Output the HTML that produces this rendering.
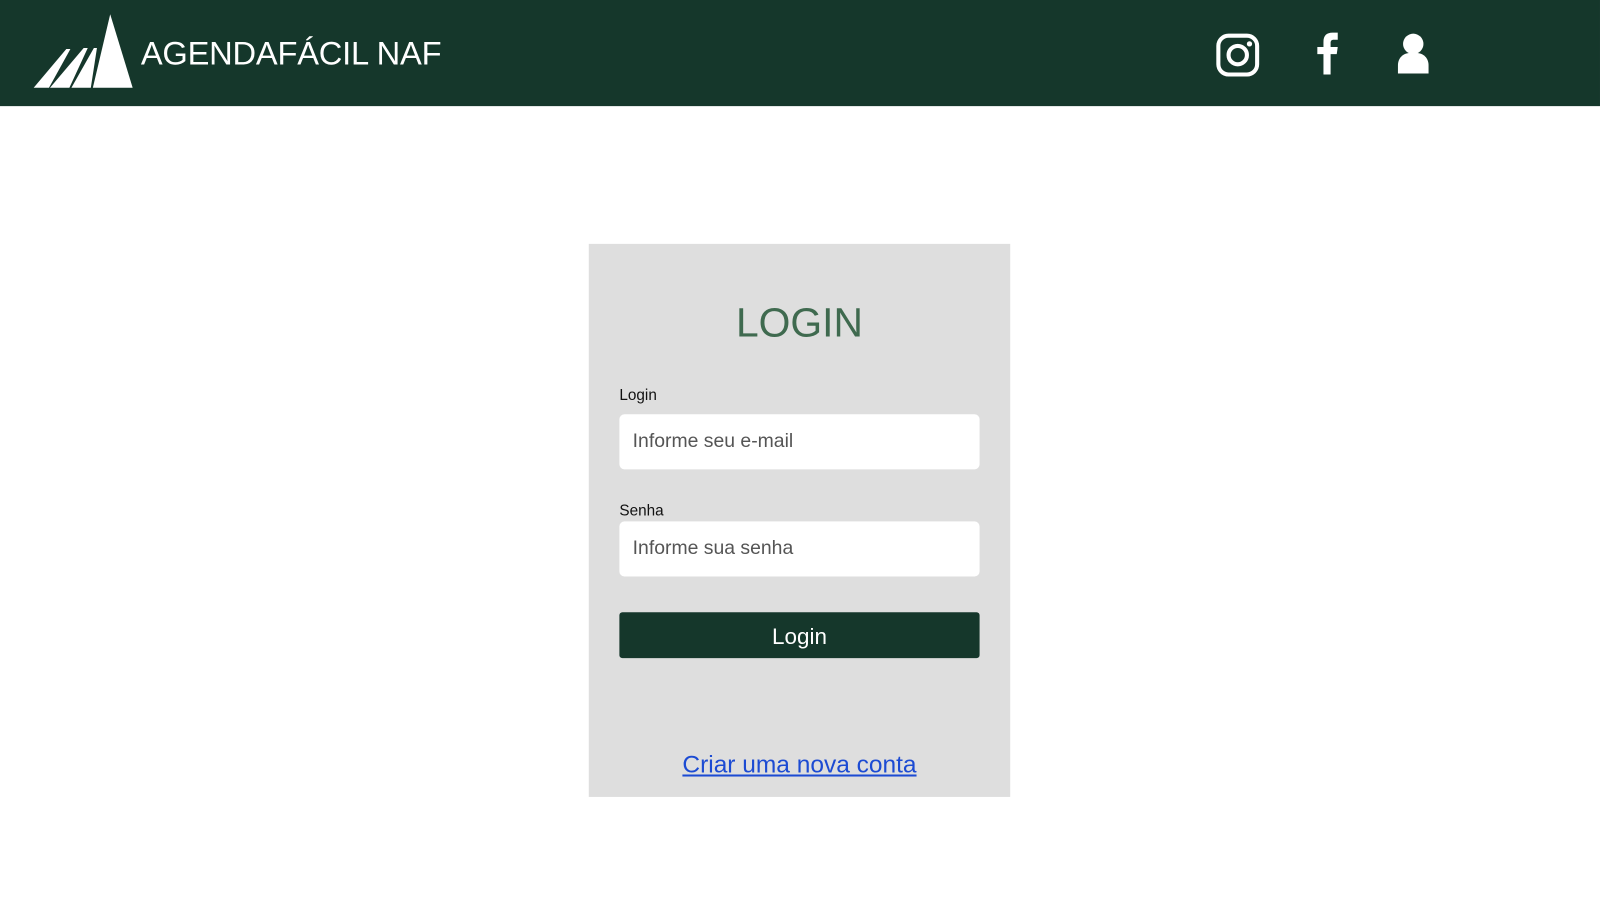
<!DOCTYPE html>
<html><head><meta charset="utf-8"><style>
body{margin:0;width:1600px;height:900px;background:#fff;font-family:"Liberation Sans",sans-serif;position:relative;overflow:hidden}
.wrap{position:absolute;left:0;top:0;width:1568px;height:882px;transform:scale(1.0204);transform-origin:0 0}
.hdr{position:absolute;left:0;top:0;width:1568px;height:104px;background:#15372b}
.brand{position:absolute;left:138px;top:34px;color:#fff;font-size:32px;letter-spacing:-0.2px}
.card{position:absolute;left:577px;top:239px;width:413px;height:542px;background:#dedede}
h1{position:absolute;left:0;width:413px;top:56px;margin:0;text-align:center;font-weight:normal;font-size:40px;color:#3f6a4f}
.lbl{position:absolute;left:30px;font-size:15px;color:#111}
.inp{position:absolute;left:30px;width:353px;height:54px;background:#fff;border-radius:5px;font-size:19px;color:#555;line-height:54px;box-sizing:border-box;padding-left:13px}
.btn{position:absolute;left:30px;top:361px;width:353px;height:45px;background:#15372b;border-radius:3px;color:#fff;font-size:22px;text-align:center;line-height:47px}
.lnk{position:absolute;left:0;width:413px;top:497px;text-align:center;font-size:24px;color:#1c4bd3;text-decoration:underline}
</style></head><body>
<div class="wrap">
<div class="hdr">
<svg width="140" height="104" style="position:absolute;left:0;top:0">
<polygon points="108,14 130,86 91,86" fill="#fff"/>
<polygon points="33,86 48,86 69,48 65,48" fill="#fff"/>
<polygon points="49,86 68,86 86,47 82,47" fill="#fff"/>
<polygon points="70,86 89,86 95,47 92,47" fill="#fff"/>
</svg>
<div class="brand">AGENDAFÁCIL NAF</div>
<svg width="260" height="80" style="position:absolute;left:1170px;top:15px">
<rect x="24" y="20" width="38" height="38" rx="10" fill="none" stroke="#fff" stroke-width="4"/>
<circle cx="43" cy="39" r="9" fill="none" stroke="#fff" stroke-width="4"/>
<circle cx="54.5" cy="28" r="2.6" fill="#fff"/>
<path d="M127 58V38h-6v-7h6v-5c0-6 3-9 9-9h5v7h-4c-2 0-3 1-3 3v4h7l-1 7h-6v20z" fill="#fff"/>
<circle cx="215" cy="28" r="10" fill="#fff"/>
<path d="M200 57v-8c0-7 5-12 12-12h6c7 0 12 5 12 12v8z" fill="#fff"/>
</svg>
</div>
<div class="card">
<h1>LOGIN</h1>
<div class="lbl" style="top:140px">Login</div>
<div class="inp" style="top:167px">Informe seu e-mail</div>
<div class="lbl" style="top:253px">Senha</div>
<div class="inp" style="top:272px">Informe sua senha</div>
<div class="btn">Login</div>
<div class="lnk">Criar uma nova conta</div>
</div>
</div>
</body></html>
